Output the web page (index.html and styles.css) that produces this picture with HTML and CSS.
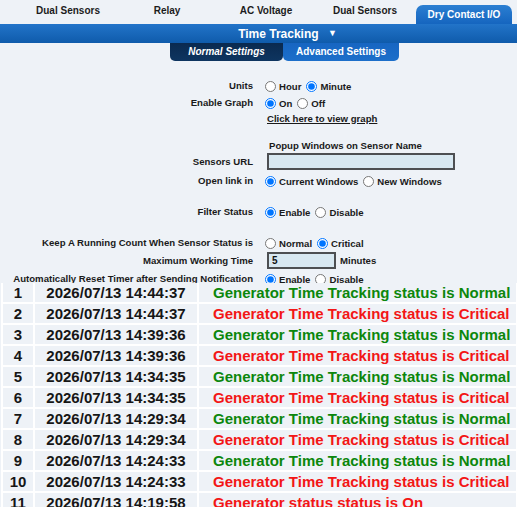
FILE: index.html
```html
<!DOCTYPE html>
<html lang="en">

<head>
    <meta charset="UTF-8">
    <meta name="viewport" content="width=device-width, initial-scale=1.0">
    <title>Dry Contact I/O - Time Tracking</title>
    <link rel="stylesheet" href="styles.css">
</head>

<body>
    <div class="nav">
        <a class="nav-item" href="#">Dual Sensors</a>
        <a class="nav-item" href="#">Relay</a>
        <a class="nav-item" href="#">AC Voltage</a>
        <a class="nav-item" href="#">Dual Sensors</a>
        <a class="nav-item active" href="#">Dry Contact I/O</a>
    </div>

    <div class="title-bar">Time Tracking <span class="arrow">&#9660;</span></div>

    <div class="subtabs">
        <a class="subtab current" href="#">Normal Settings</a>
        <a class="subtab" href="#">Advanced Settings</a>
    </div>

    <form class="settings">
        <div class="row">
            <label class="lbl">Units</label>
            <div class="ctl">
                <label class="opt"><input type="radio" name="units">Hour</label>
                <label class="opt"><input type="radio" name="units" checked>Minute</label>
            </div>
        </div>
        <div class="row">
            <label class="lbl">Enable Graph</label>
            <div class="ctl">
                <label class="opt"><input type="radio" name="graph" checked>On</label>
                <label class="opt"><input type="radio" name="graph">Off</label>
            </div>
        </div>
        <div class="row row-link">
            <span class="lbl"></span>
            <div class="ctl"><a class="graph-link" href="#">Click here to view graph</a></div>
        </div>
        <div class="row row-heading">
            <span class="lbl"></span>
            <div class="ctl heading">Popup Windows on Sensor Name</div>
        </div>
        <div class="row">
            <label class="lbl">Sensors URL</label>
            <div class="ctl"><input class="txt url" type="text" value=""></div>
        </div>
        <div class="row row-tall">
            <label class="lbl">Open link in</label>
            <div class="ctl">
                <label class="opt"><input type="radio" name="target" checked>Current Windows</label>
                <label class="opt"><input type="radio" name="target">New Windows</label>
            </div>
        </div>
        <div class="row gap-13">
            <label class="lbl">Filter Status</label>
            <div class="ctl">
                <label class="opt"><input type="radio" name="filter" checked>Enable</label>
                <label class="opt"><input type="radio" name="filter">Disable</label>
            </div>
        </div>
        <div class="row gap-14">
            <label class="lbl">Keep A Running Count When Sensor Status is</label>
            <div class="ctl">
                <label class="opt"><input type="radio" name="count">Normal</label>
                <label class="opt"><input type="radio" name="count" checked>Critical</label>
            </div>
        </div>
        <div class="row row-input">
            <label class="lbl">Maximum Working Time</label>
            <div class="ctl"><input class="txt minutes" type="text" value="5"><span class="unit">Minutes</span></div>
        </div>
        <div class="row row-last">
            <label class="lbl">Automatically Reset Timer after Sending Notification</label>
            <div class="ctl">
                <label class="opt"><input type="radio" name="reset" checked>Enable</label>
                <label class="opt"><input type="radio" name="reset">Disable</label>
            </div>
        </div>
    </form>

    <table class="log">
        <colgroup>
            <col class="c-num">
            <col class="c-date">
            <col class="c-msg">
        </colgroup>
        <tr><td>1</td><td>2026/07/13 14:44:37</td><td class="normal">Generator Time Tracking status is Normal</td></tr>
        <tr><td>2</td><td>2026/07/13 14:44:37</td><td class="critical">Generator Time Tracking status is Critical</td></tr>
        <tr><td>3</td><td>2026/07/13 14:39:36</td><td class="normal">Generator Time Tracking status is Normal</td></tr>
        <tr><td>4</td><td>2026/07/13 14:39:36</td><td class="critical">Generator Time Tracking status is Critical</td></tr>
        <tr><td>5</td><td>2026/07/13 14:34:35</td><td class="normal">Generator Time Tracking status is Normal</td></tr>
        <tr><td>6</td><td>2026/07/13 14:34:35</td><td class="critical">Generator Time Tracking status is Critical</td></tr>
        <tr><td>7</td><td>2026/07/13 14:29:34</td><td class="normal">Generator Time Tracking status is Normal</td></tr>
        <tr><td>8</td><td>2026/07/13 14:29:34</td><td class="critical">Generator Time Tracking status is Critical</td></tr>
        <tr><td>9</td><td>2026/07/13 14:24:33</td><td class="normal">Generator Time Tracking status is Normal</td></tr>
        <tr><td>10</td><td>2026/07/13 14:24:33</td><td class="critical">Generator Time Tracking status is Critical</td></tr>
        <tr><td>11</td><td>2026/07/13 14:19:58</td><td class="critical">Generator status status is On</td></tr>
    </table>
</body>

</html>
```

FILE: styles.css
```css
body {
    margin: 0;
    background: #eef2f7;
    font-family: "Liberation Sans", Arial, sans-serif;
    font-size: 10px;
    font-weight: bold;
    color: #1a1a1a;
    overflow: hidden;
}

a {
    color: inherit;
    text-decoration: none;
}

/* top menu */
.nav {
    display: flex;
    height: 24px;
    padding-left: 20px;
    gap: 3px;
}

.nav-item {
    width: 96px;
    height: 19px;
    margin-top: 5px;
    line-height: 11px;
    text-align: center;
    color: #1c1c1c;
}

.nav-item.active {
    line-height: 19px;
    color: #fff;
    background: linear-gradient(#2b7fd2, #1565bf);
    border-radius: 7px 7px 0 0;
}

.title-bar {
    height: 19px;
    line-height: 19px;
    text-align: center;
    font-size: 12px;
    color: #fff;
    background: linear-gradient(#2274c9, #0f5bab);
    padding-left: 58px;
}

.arrow {
    font-size: 9px;
    margin-left: 6px;
    vertical-align: 2px;
}

/* settings tabs */
.subtabs {
    display: flex;
    margin-left: 170px;
    height: 18px;
}

.subtab {
    height: 18px;
    line-height: 17px;
    text-align: center;
    color: #fff;
    border-radius: 0 0 5px 5px;
    background: linear-gradient(#1766c2, #1c6fca);
    width: 116px;
}

.subtab.current {
    width: 113px;
    font-style: italic;
    background: linear-gradient(#0a2a50, #0e3560);
}

/* form */
.settings {
    padding-top: 16px;
    font-size: 9.6px;
}

.row {
    display: flex;
    align-items: center;
    height: 17px;
}

.lbl {
    width: 253px;
    flex: none;
    text-align: right;
}

.ctl {
    margin-left: 12px;
    display: flex;
    align-items: center;
    white-space: nowrap;
}

.opt {
    display: inline-flex;
    align-items: center;
    margin-right: 5px;
    padding-top: 2px;
}

.opt input {
    width: 11px;
    height: 11px;
    margin: 0 3px 0 0;
}

.row-link {
    height: 14px;
}

.graph-link {
    text-decoration: underline;
    margin-left: 2px;
}

.row-heading {
    margin-top: 12px;
    height: 16px;
}

.heading {
    padding-left: 4px;
}

.row-tall {
    height: 20px;
}

.gap-13 {
    margin-top: 13px;
}

.gap-14 {
    margin-top: 14px;
}

.row-input {
    height: 19px;
}

.row-last {
    height: 17px;
}

.txt {
    box-sizing: border-box;
    height: 17px;
    margin: 0 0 0 2px;
    padding: 0 3px;
    border: 2px solid #4d4f52;
    background: #d8e8f1;
    font-family: inherit;
    font-size: 10px;
    font-weight: bold;
    color: #111;
}

.url {
    width: 188px;
}

.minutes {
    width: 69px;
}

.unit {
    margin-left: 4px;
}

/* event log */
.log {
    position: relative;
    margin: -4px 0 0 1px;
    width: 517px;
    table-layout: fixed;
    border-collapse: collapse;
    font-size: 15px;
    color: #161616;
}

.c-num {
    width: 32px;
}

.c-date {
    width: 164px;
}

.log td {
    height: 19px;
    padding: 0;
    line-height: 19px;
    border: 2px solid #fff;
    background: #eef2f7;
    white-space: nowrap;
    text-align: center;
}

.log tr:first-child td {
    border-top: 0;
}

.log td.normal,
.log td.critical {
    text-align: left;
    padding-left: 14px;
}

.normal {
    color: #0c870c;
}

.critical {
    color: #f31616;
}
```
